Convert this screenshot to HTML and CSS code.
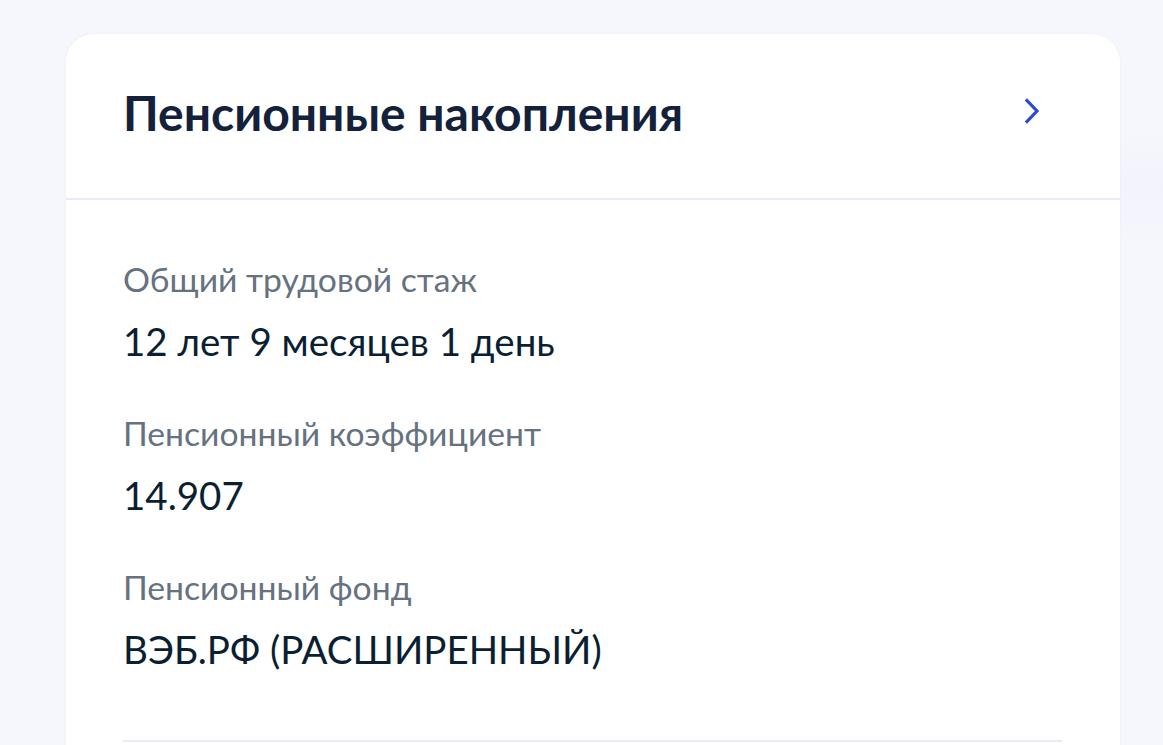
FILE: index.html
```html
<!DOCTYPE html>
<html lang="ru">
<head>
<meta charset="utf-8">
<link rel="stylesheet" href="styles.css">
</head>
<body>
<div class="page">
  <div class="glow"></div>
  <section class="card">
    <header class="card-head">
      <h2 class="card-title">Пенсионные накопления</h2>
      <svg class="chevron" width="16" height="26" viewBox="0 0 16 26" aria-hidden="true">
        <path d="M3 2.5 L13 13 L3 23.5" fill="none" stroke="#2f49d1" stroke-width="3.2" stroke-linecap="square" stroke-linejoin="miter"/>
      </svg>
    </header>
    <div class="card-body">
      <div class="field">
        <div class="label">Общий трудовой стаж</div>
        <div class="value">12 лет 9 месяцев 1 день</div>
      </div>
      <div class="field">
        <div class="label">Пенсионный коэффициент</div>
        <div class="value">14.907</div>
      </div>
      <div class="field">
        <div class="label">Пенсионный фонд</div>
        <div class="value">ВЭБ.РФ (РАСШИРЕННЫЙ)</div>
      </div>
      <div class="divider"></div>
    </div>
  </section>
</div>
</body>
</html>
```
FILE: styles.css
```css
html, body {
  margin: 0;
  padding: 0;
  height: 100%;
  overflow: hidden;
}
body {
  background: #f6f7fc;
  font-family: Lato, "Open Sans", sans-serif;
  color: #0b1f33;
}
.page {
  position: relative;
  padding: 34px 43px 0 66px;
  height: 100%;
  box-sizing: border-box;
  overflow: hidden;
}
.glow {
  position: absolute;
  left: 640px;
  top: 30px;
  width: 1000px;
  height: 1000px;
  border-radius: 50%;
  background: radial-gradient(circle, rgba(240,242,252,0) 40%, rgba(238,240,252,0.6) 49%, rgba(240,242,252,0) 56%);
  pointer-events: none;
}
.card {
  position: relative;
  background: #ffffff;
  border-radius: 28px 28px 0 0;
  height: 760px;
  box-shadow: 0 0 2px rgba(200,206,235,0.25);
}
.card-head {
  display: flex;
  align-items: center;
  justify-content: space-between;
  height: 164px;
  padding: 0 80px 0 57px;
  border-bottom: 2px solid #e8ebfa;
}
.card-title {
  margin: 0 0 7px;
  font-size: 48px;
  font-weight: 700;
  color: #13213a;
  letter-spacing: 0;
}
.chevron {
  display: block;
  margin-bottom: 11px;
}
.card-body {
  display: flex;
  flex-direction: column;
  gap: 40px;
  padding: 55px 58px 0 57px;
}
.label {
  font-size: 33.7px;
  line-height: 48px;
  color: #66727f;
}
.value {
  font-size: 38.5px;
  line-height: 56px;
  margin-top: 10px;
  color: #0b1f33;
}
.divider {
  height: 2px;
  background: #e8ebfa;
  margin-top: 23px;
}
```
